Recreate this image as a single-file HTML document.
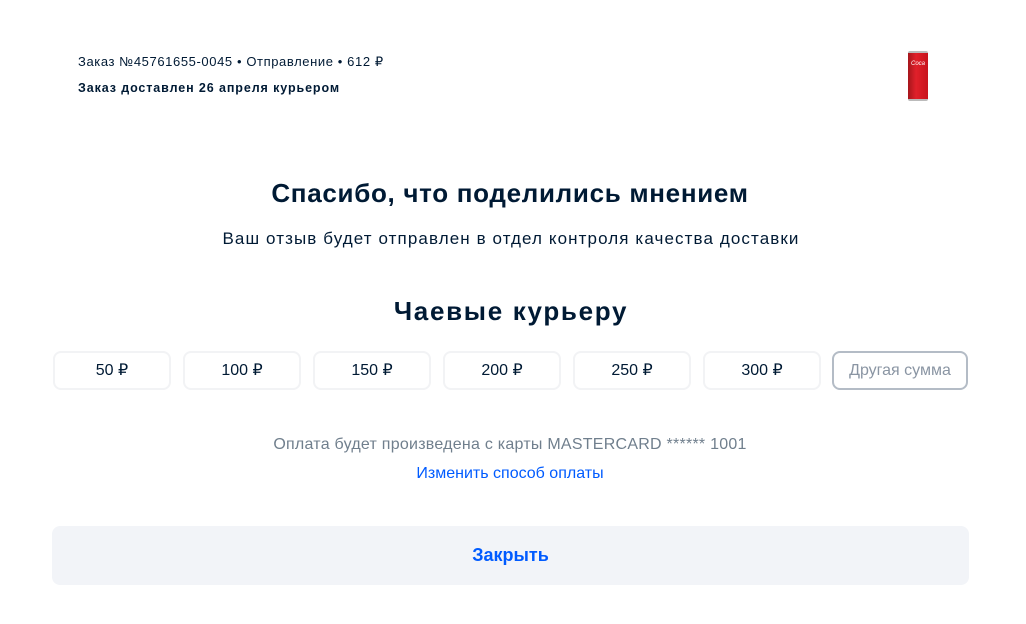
<!DOCTYPE html>
<html><head><meta charset="utf-8"><style>
body{margin:0;width:1026px;height:624px;background:#fff;font-family:"Liberation Sans",sans-serif;color:#001a34;position:relative;overflow:hidden}
.a{position:absolute}
.btn{position:absolute;top:351px;height:35px;width:114px;border:2px solid #f2f3f5;border-radius:8px;text-align:center;line-height:35px;font-size:16px}
</style></head><body>
<div class="a" style="left:78px;top:54px;font-size:13px;letter-spacing:0.6px">Заказ №45761655-0045 • Отправление • 612 ₽</div>
<div class="a" style="left:78px;top:81px;font-size:12.5px;font-weight:bold;letter-spacing:0.9px">Заказ доставлен 26 апреля курьером</div>
<div class="a" style="left:908px;top:51px;width:20px;height:50px;background:linear-gradient(90deg,#a5161c,#e0202a 40%,#c8141d);border-radius:2px;border-top:2px solid #bbb;border-bottom:2px solid #bbb;box-sizing:border-box">
<div style="color:#fff;font-size:6px;font-style:italic;margin-top:8px;text-align:center">Coca</div></div>
<div class="a" style="left:0;width:1020px;top:178px;text-align:center;font-size:26px;font-weight:bold;letter-spacing:0.7px">Спасибо, что поделились мнением</div>
<div class="a" style="left:0;width:1022px;top:229px;text-align:center;font-size:17px;letter-spacing:1.1px">Ваш отзыв будет отправлен в отдел контроля качества доставки</div>
<div class="a" style="left:0;width:1022px;top:296px;text-align:center;font-size:26px;font-weight:bold;letter-spacing:1.7px">Чаевые курьеру</div>
<div class="btn" style="left:53px">50 ₽</div>
<div class="btn" style="left:183px">100 ₽</div>
<div class="btn" style="left:313px">150 ₽</div>
<div class="btn" style="left:443px">200 ₽</div>
<div class="btn" style="left:573px">250 ₽</div>
<div class="btn" style="left:703px">300 ₽</div>
<div class="btn" style="left:832px;width:132px;border-color:#b4bcc6;color:#8a95a3">Другая сумма</div>
<div class="a" style="left:0;width:1020px;top:436px;text-align:center;font-size:16px;color:#707f8d;letter-spacing:0.25px">Оплата будет произведена с карты MASTERCARD ****** 1001</div>
<div class="a" style="left:0;width:1020px;top:465px;text-align:center;font-size:16px;color:#005bff">Изменить способ оплаты</div>
<div class="a" style="left:52px;top:526px;width:917px;height:59px;background:#f2f4f8;border-radius:8px;text-align:center;line-height:59px;font-size:18px;color:#005bff;font-weight:bold">Закрыть</div>
</body></html>
